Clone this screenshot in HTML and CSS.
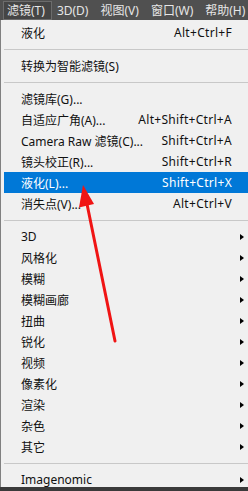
FILE: index.html
```html
<!DOCTYPE html>
<html lang="zh-CN">
<head>
    <meta charset="utf-8">
    <title>滤镜菜单</title>
    <link rel="stylesheet" href="styles.css">
</head>
<body>
    <div class="menubar">
        <span class="mb_item on">滤镜(T)</span>
        <span class="mb_item">3D(D)</span>
        <span class="mb_item">视图(V)</span>
        <span class="mb_item">窗口(W)</span>
        <span class="mb_item">帮助(H)</span>
    </div>
    <ul class="menu">
        <li class="mi"><span class="label">液化</span><span class="key">Alt+Ctrl+F</span></li>
        <li class="sep"></li>
        <li class="mi"><span class="label">转换为智能滤镜(S)</span></li>
        <li class="sep"></li>
        <li class="mi"><span class="label">滤镜库(G)...</span></li>
        <li class="mi"><span class="label">自适应广角(A)...</span><span class="key">Alt+Shift+Ctrl+A</span></li>
        <li class="mi"><span class="label">Camera Raw 滤镜(C)...</span><span class="key">Shift+Ctrl+A</span></li>
        <li class="mi"><span class="label">镜头校正(R)...</span><span class="key">Shift+Ctrl+R</span></li>
        <li class="mi hover"><span class="label">液化(L)...</span><span class="key">Shift+Ctrl+X</span></li>
        <li class="mi"><span class="label">消失点(V)...</span><span class="key">Alt+Ctrl+V</span></li>
        <li class="sep"></li>
        <li class="mi sub"><span class="label">3D</span><span class="tri"></span></li>
        <li class="mi sub"><span class="label">风格化</span><span class="tri"></span></li>
        <li class="mi sub"><span class="label">模糊</span><span class="tri"></span></li>
        <li class="mi sub"><span class="label">模糊画廊</span><span class="tri"></span></li>
        <li class="mi sub"><span class="label">扭曲</span><span class="tri"></span></li>
        <li class="mi sub"><span class="label">锐化</span><span class="tri"></span></li>
        <li class="mi sub"><span class="label">视频</span><span class="tri"></span></li>
        <li class="mi sub"><span class="label">像素化</span><span class="tri"></span></li>
        <li class="mi sub"><span class="label">渲染</span><span class="tri"></span></li>
        <li class="mi sub"><span class="label">杂色</span><span class="tri"></span></li>
        <li class="mi sub"><span class="label">其它</span><span class="tri"></span></li>
        <li class="sep"></li>
        <li class="mi sub"><span class="label">Imagenomic</span><span class="tri"></span></li>
    </ul>

    <!-- 빨간 화살표 -->
    <svg class="arrow" width="248" height="491" viewBox="0 0 248 491">
        <line x1="115" y1="341" x2="87" y2="204" stroke="#f01414" stroke-width="3" stroke-linecap="round"/>
        <polygon points="83,185 94,204 79,207.5" fill="#f01414"/>
    </svg>
</body>
</html>
```

FILE: styles.css
```css
body {
    margin: 0;
    padding: 0;
    width: 248px;
    height: 491px;
    overflow: hidden;
    position: relative;
    background-color: #3a3a3a;
    font-family: "Noto Sans", "Noto Sans CJK SC", sans-serif;
    font-size: 12px;
}
/* =================== 상단 메뉴바 =================== */
.menubar {
    display: flex;
    align-items: center;
    gap: 3px;
    height: 20px;
    padding-left: 4px;
    background-color: #505050;
    color: #e6e6e6;
    box-sizing: border-box;
}
.mb_item {
    flex-shrink: 0;
    height: 17px;
    line-height: 17px;
    padding: 0 6px 0 3px;
    border: 1px solid transparent;
    margin-left: -1px;
    margin-right: -1px;
    white-space: nowrap;
}
.mb_item:last-child {
    padding-right: 0;
}
.mb_item.on {
    background-color: #454545;
    border-color: #6c6c6c;
}
/* =================== 드롭다운 =================== */
.menu {
    list-style: none;
    margin: 0;
    padding: 2px 0 0;
    height: 467px;
    box-sizing: border-box;
    background-color: #f0f0f0;
    border-left: 1px solid #808080;
    color: #111;
}
.mi {
    display: flex;
    align-items: center;
    height: 21px;
    margin-left: 3px;
    padding: 0 16px 0 17px;
    white-space: nowrap;
}
.mi .label {
    flex: 1;
}
.mi .key {
    letter-spacing: 0.3px;
}
.mi.hover {
    background-color: #0078d7;
    color: #fff;
}
.sep {
    height: 1px;
    margin: 6px 0 5px 3px;
    background-color: #c8c8c8;
}
.tri {
    width: 0;
    height: 0;
    margin-right: -12px;
    border-left: 4px solid #000;
    border-top: 3.5px solid transparent;
    border-bottom: 3.5px solid transparent;
}
.arrow {
    position: absolute;
    left: 0;
    top: 0;
    pointer-events: none;
}
```
